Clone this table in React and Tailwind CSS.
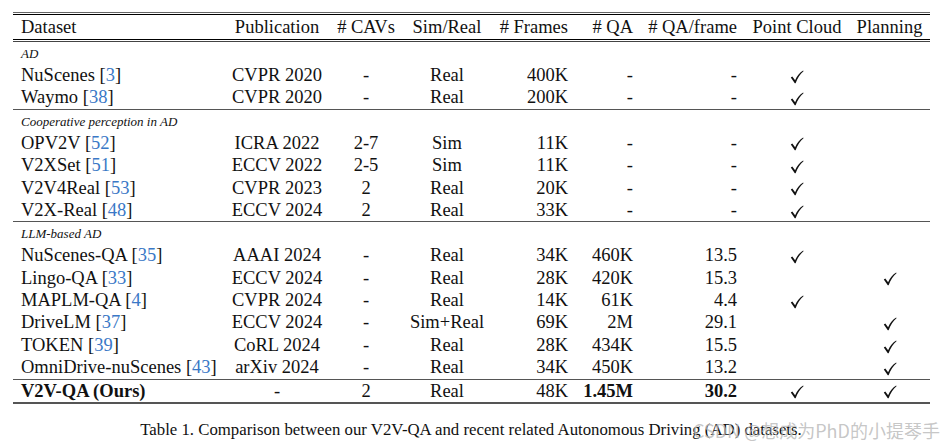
import React from "react";

const C = ({ n }) => (
  <>
    [<span className="text-[#3a78c6]">{n}</span>]
  </>
);

const Check = () => (
  <svg width="14" height="14" viewBox="0 0 14 14" className="inline-block align-middle">
    <path
      d="M0.8 7.6 L2.3 6.6 L5.1 10.2 C7.2 5.8 9.6 2.9 13.2 0.6 L13.5 1.2 C10.2 3.9 7.6 7.9 5.6 13.2 L4.8 13.2 Z"
      fill="#111"
    />
  </svg>
);

const cols = [
  "w-[215px] pl-[8px] text-left",
  "w-[98px] text-center",
  "w-[80px] text-center",
  "w-[82px] text-center",
  "w-[88px] pr-[8px] text-right",
  "w-[65px] pr-[8px] text-right",
  "w-[104px] pr-[8px] text-right",
  "w-[104px] text-center",
  "w-[81px] text-center",
];

const Row = ({ cells, h = "h-[22.4px]" }) => (
  <div className={`flex items-center ${h}`}>
    {cells.map((c, i) => (
      <div key={i} className={`${cols[i]} shrink-0 whitespace-nowrap leading-none`}>
        {c}
      </div>
    ))}
  </div>
);

const Label = ({ children }) => (
  <div className="flex items-center h-[22px] pt-[1px] pl-[8px] italic text-[13px] leading-none">
    {children}
  </div>
);

const Thin = () => <div className="h-[1px] bg-[#555]" />;

const ck = <Check />;

export default function App() {
  return (
    <div className="relative w-[942px] h-[445px] bg-white text-[#111] font-['Liberation_Serif',serif] overflow-hidden">
      <div className="ml-[13px] mt-[12px] w-[917px] text-[18.5px]">
        <div className="h-[1px] bg-[#666]" />
        <div className="h-[1px]" />
        <div className="h-[1px] bg-black" />
        <Row
          h="h-[24px]"
          cells={["Dataset", "Publication", "# CAVs", "Sim/Real", "# Frames", "# QA", "# QA/frame", "Point Cloud", "Planning"]}
        />
        <div className="h-[1px] bg-black" />
        <div className="h-[1px]" />
        <div className="h-[1px] bg-[#444]" />

        <Label>AD</Label>
        <Row cells={[<>NuScenes <C n="3" /></>, "CVPR 2020", "-", "Real", "400K", "-", "-", ck, ""]} />
        <Row cells={[<>Waymo <C n="38" /></>, "CVPR 2020", "-", "Real", "200K", "-", "-", ck, ""]} />
        <Thin />

        <Label>Cooperative perception in AD</Label>
        <Row cells={[<>OPV2V <C n="52" /></>, "ICRA 2022", "2-7", "Sim", "11K", "-", "-", ck, ""]} />
        <Row cells={[<>V2XSet <C n="51" /></>, "ECCV 2022", "2-5", "Sim", "11K", "-", "-", ck, ""]} />
        <Row cells={[<>V2V4Real <C n="53" /></>, "CVPR 2023", "2", "Real", "20K", "-", "-", ck, ""]} />
        <Row cells={[<>V2X-Real <C n="48" /></>, "ECCV 2024", "2", "Real", "33K", "-", "-", ck, ""]} />
        <Thin />

        <Label>LLM-based AD</Label>
        <Row cells={[<>NuScenes-QA <C n="35" /></>, "AAAI 2024", "-", "Real", "34K", "460K", "13.5", ck, ""]} />
        <Row cells={[<>Lingo-QA <C n="33" /></>, "ECCV 2024", "-", "Real", "28K", "420K", "15.3", "", ck]} />
        <Row cells={[<>MAPLM-QA <C n="4" /></>, "CVPR 2024", "-", "Real", "14K", "61K", "4.4", ck, ""]} />
        <Row cells={[<>DriveLM <C n="37" /></>, "ECCV 2024", "-", "Sim+Real", "69K", "2M", "29.1", "", ck]} />
        <Row cells={[<>TOKEN <C n="39" /></>, "CoRL 2024", "-", "Real", "28K", "434K", "15.5", "", ck]} />
        <Row cells={[<>OmniDrive-nuScenes <C n="43" /></>, "arXiv 2024", "-", "Real", "34K", "450K", "13.2", "", ck]} />
        <Thin />

        <Row
          cells={[
            <span className="font-bold">V2V-QA (Ours)</span>,
            "-",
            "2",
            "Real",
            "48K",
            <span className="font-bold">1.45M</span>,
            <span className="font-bold">30.2</span>,
            ck,
            ck,
          ]}
        />
        <div className="h-[1.5px] bg-[#555]" />
      </div>

      <div className="mt-[18px] w-[942px] text-center text-[16.8px] leading-none">
        Table 1. Comparison between our V2V-QA and recent related Autonomous Driving (AD) datasets.
      </div>

      <div className="absolute left-[693px] top-[421px] text-[18px] leading-none text-[#b8b8b8]/80 font-['Noto_Sans_CJK_SC','Noto_Sans',sans-serif] whitespace-nowrap">
        CSDN @想成为PhD的小提琴手
      </div>
    </div>
  );
}
